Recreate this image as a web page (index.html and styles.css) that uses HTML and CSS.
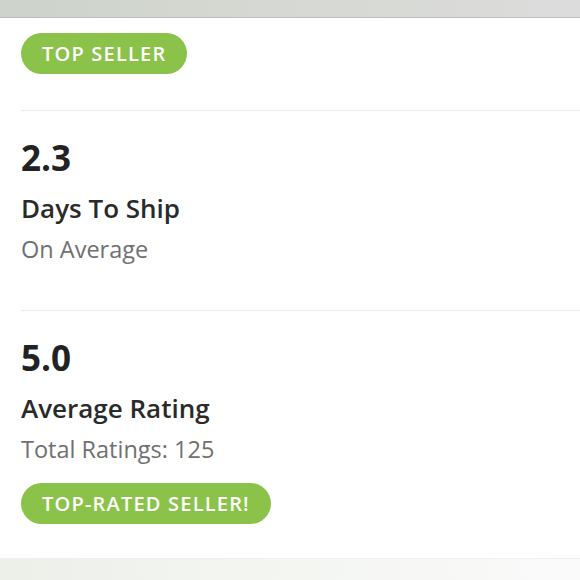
FILE: index.html
```html
<!DOCTYPE html>
<html>
<head>
<meta charset="utf-8">
<link rel="stylesheet" href="styles.css">
</head>
<body>
<div class="topbar"></div>
<main class="content">
  <section class="block block-badge">
    <span class="pill pill-top">TOP SELLER</span>
  </section>
  <section class="block block-ship">
    <div class="stat">2.3</div>
    <div class="label">Days To Ship</div>
    <div class="sub">On Average</div>
  </section>
  <section class="block block-rating">
    <div class="stat">5.0</div>
    <div class="label">Average Rating</div>
    <div class="sub">Total Ratings: 125</div>
    <span class="pill pill-rated">TOP-RATED SELLER!</span>
  </section>
</main>
<div class="bottombar"></div>
</body>
</html>
```
FILE: styles.css
```css
html, body {
  margin: 0;
  padding: 0;
  background: #ffffff;
}
body {
  width: 580px;
  height: 580px;
  overflow: hidden;
  font-family: "Open Sans", Lato, sans-serif;
  display: flex;
  flex-direction: column;
}
.topbar {
  height: 17px;
  flex: none;
  background: linear-gradient(90deg, #cdd3ca 0%, #d6d9d3 50%, #dcdcdc 100%);
  border-bottom: 1px solid #bdbdbd;
}
.content {
  flex: 1;
  padding-left: 21px;
  display: flex;
  flex-direction: column;
}
.block {
  display: flex;
  flex-direction: column;
  align-items: flex-start;
}
.block-badge {
  padding-top: 15px;
  height: 93px;
  box-sizing: border-box;
  border-bottom: 1px solid #ececec;
}
.block-ship {
  height: 200px;
  box-sizing: border-box;
  padding-top: 27px;
  border-bottom: 1px solid #ececec;
}
.block-rating {
  padding-top: 27px;
}
.pill {
  display: inline-flex;
  align-items: center;
  height: 41px;
  border-radius: 21px;
  background: #8bc34a;
  color: #ffffff;
  font-weight: 600;
  font-size: 20px;
  letter-spacing: 1.2px;
  padding: 0 21px 0 21px;
  box-sizing: border-box;
}
.stat {
  font-size: 35px;
  font-weight: 700;
  color: #222222;
  line-height: 40px;
}
.label {
  font-size: 26px;
  font-weight: 600;
  color: #2a2a2a;
  line-height: 30px;
  margin-top: 15px;
}
.sub {
  font-size: 23.5px;
  color: #707070;
  line-height: 28px;
  margin-top: 12px;
}
.pill-rated {
  margin-top: 20px;
}
.bottombar {
  height: 21px;
  flex: none;
  background: linear-gradient(90deg, #ecf0e9 0%, #f4f6f2 50%, #fafafa 100%);
  border-top: 1px solid #f0f0f0;
}
```
